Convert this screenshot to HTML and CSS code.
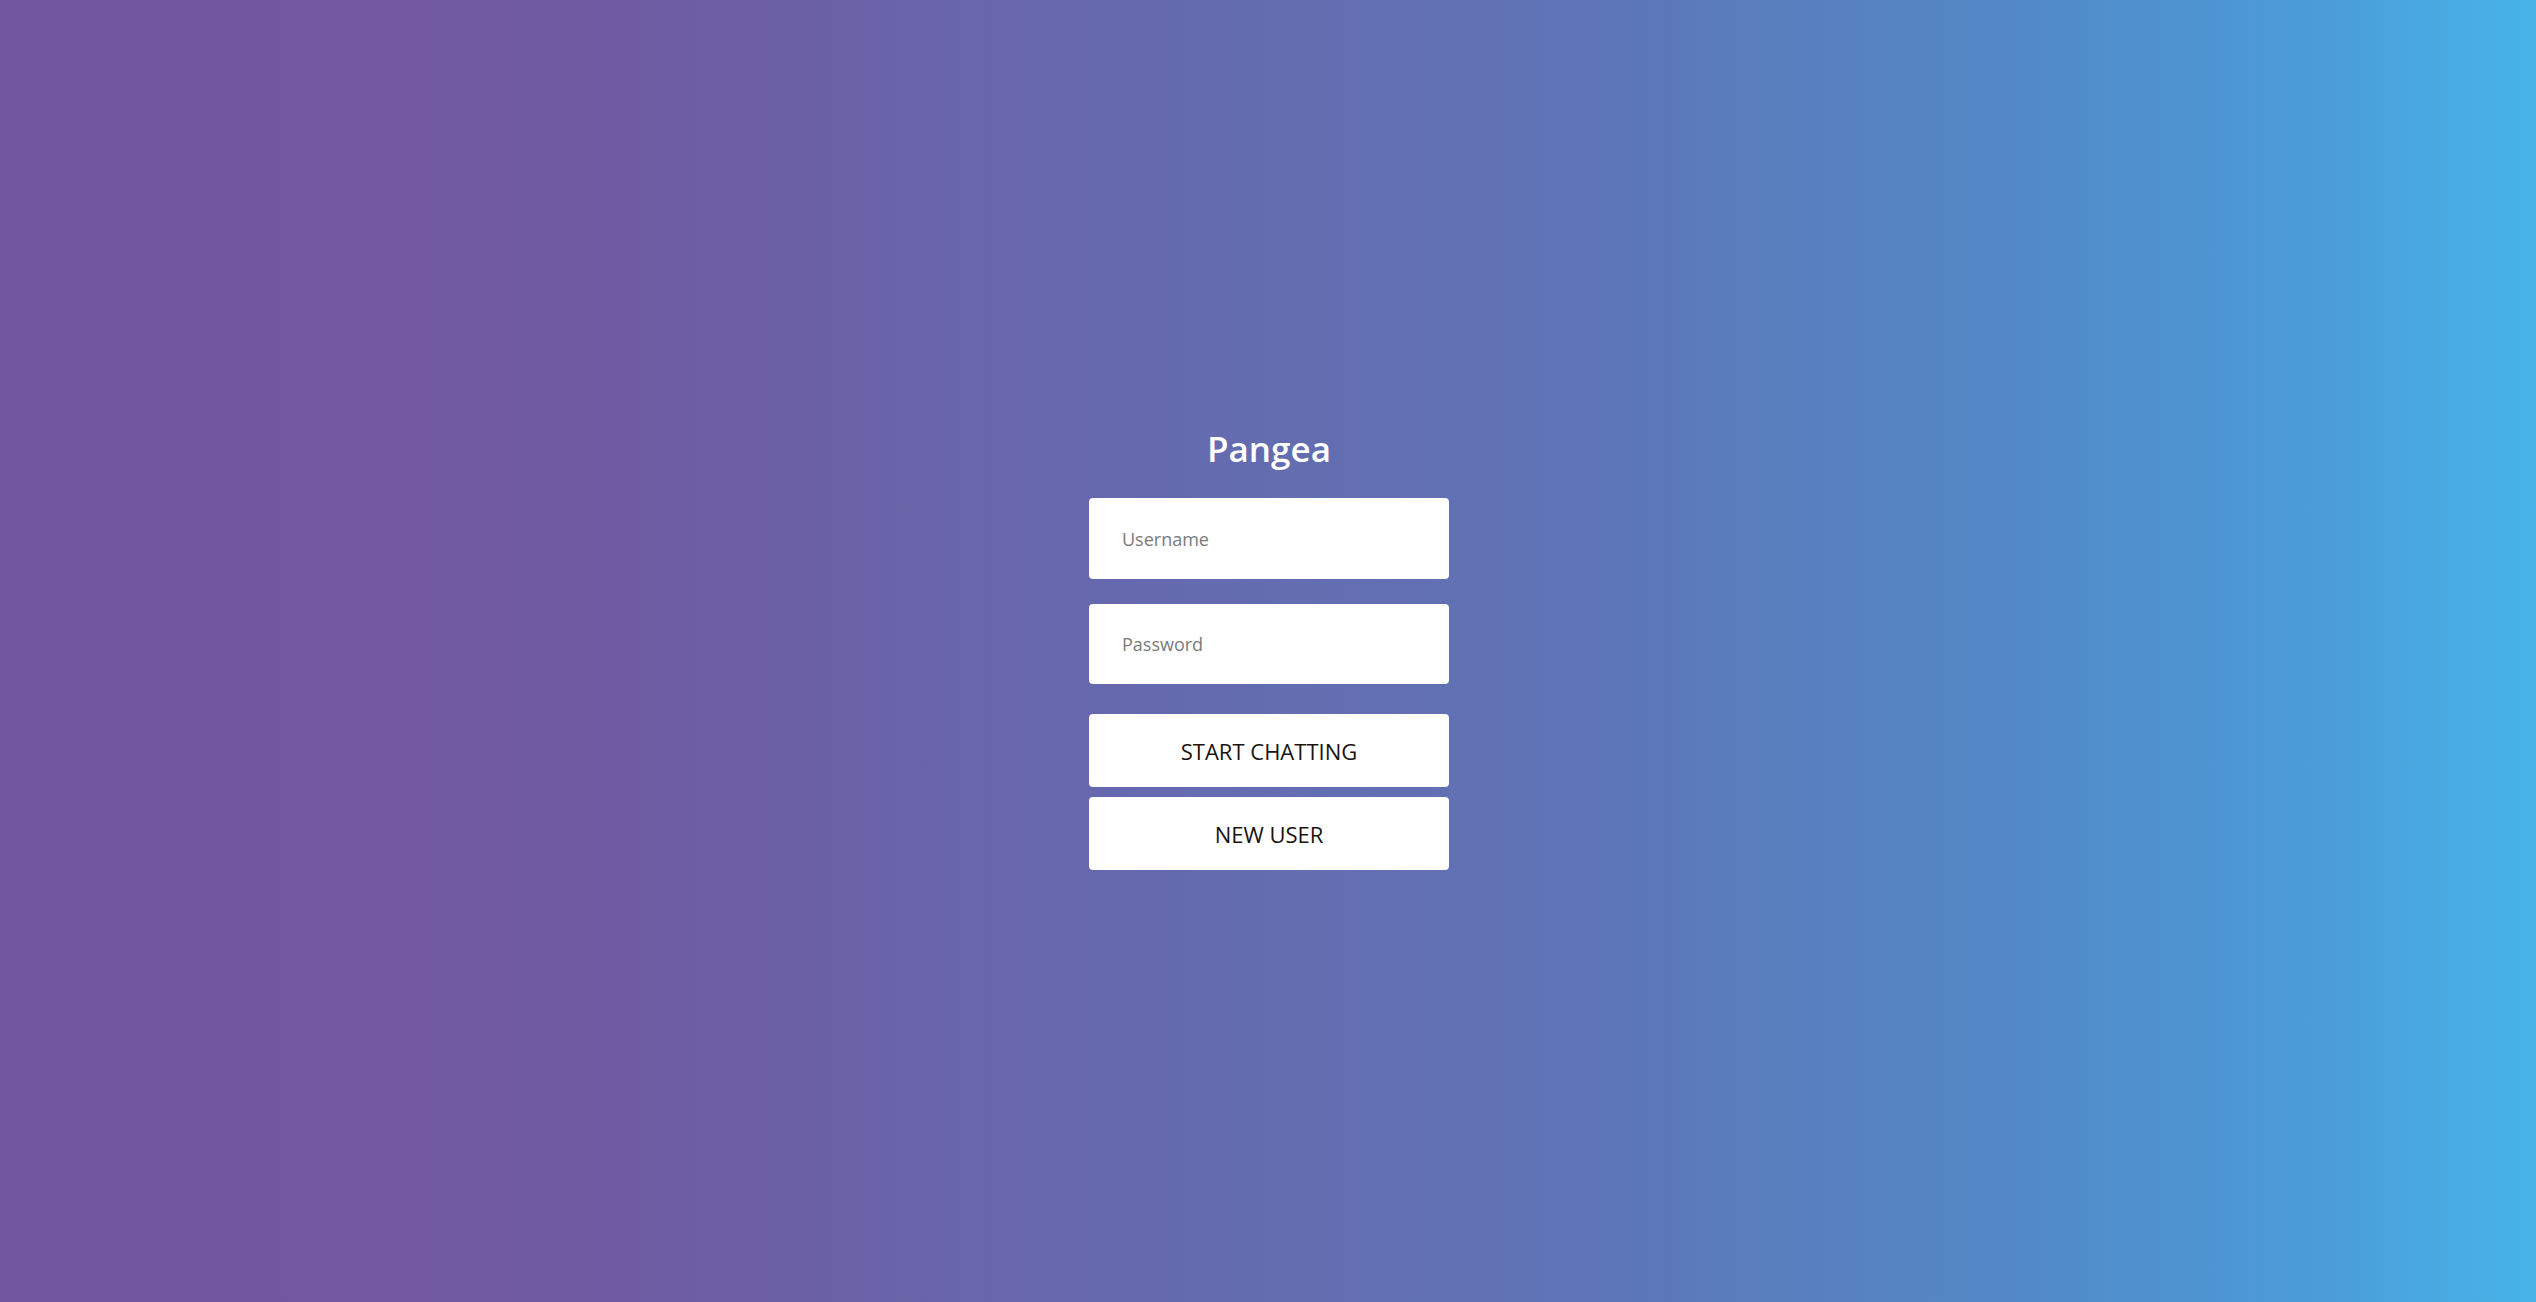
FILE: index.html
```html
<!DOCTYPE html>
<html lang="en">
<head>
<meta charset="utf-8">
<title>Pangea</title>
<link rel="stylesheet" href="styles.css">
</head>
<body>
<main class="page">
  <form class="login">
    <h1 class="title">Pangea</h1>
    <input class="field" type="text" placeholder="Username">
    <input class="field field-gap" type="password" placeholder="Password">
    <button class="btn btn-first" type="button">START CHATTING</button>
    <button class="btn" type="button">NEW USER</button>
  </form>
</main>
</body>
</html>
```
FILE: styles.css
```css
html, body {
  margin: 0;
  padding: 0;
  height: 100%;
}
body {
  font-family: "Open Sans", "Noto Sans", sans-serif;
  background: linear-gradient(to right,
    #7356a0 0%,
    #7356a0 11%,
    #6f5ba3 24%,
    #6866ab 39%,
    #6072b4 59%,
    #5388c6 79%,
    #4b9bd8 91%,
    #47b4e8 100%);
}
.page {
  height: 100vh;
  display: flex;
  justify-content: center;
  padding-left: 2px;
  box-sizing: border-box;
}
.login {
  width: 360px;
  padding-top: 428px;
  display: flex;
  flex-direction: column;
}
.title {
  margin: 0 0 28px;
  height: 42px;
  line-height: 42px;
  text-align: center;
  color: #ffffff;
  font-size: 35px;
  font-weight: 600;
}
.field {
  box-sizing: border-box;
  height: 81px;
  border: none;
  border-radius: 4px;
  background: #ffffff;
  padding: 0 33px;
  font-family: inherit;
  font-size: 18px;
  color: #333;
  outline: none;
  margin: 0;
}
.field::placeholder {
  color: #7a7a7a;
}
.field-gap {
  margin-top: 25px;
  height: 80px;
}
.btn {
  box-sizing: border-box;
  height: 73px;
  border: none;
  border-radius: 4px;
  background: #ffffff;
  font-family: inherit;
  font-size: 22px;
  color: #1a1410;
  margin: 10px 0 0;
  padding: 0;
  cursor: pointer;
}
.btn-first {
  margin-top: 30px;
}
```
